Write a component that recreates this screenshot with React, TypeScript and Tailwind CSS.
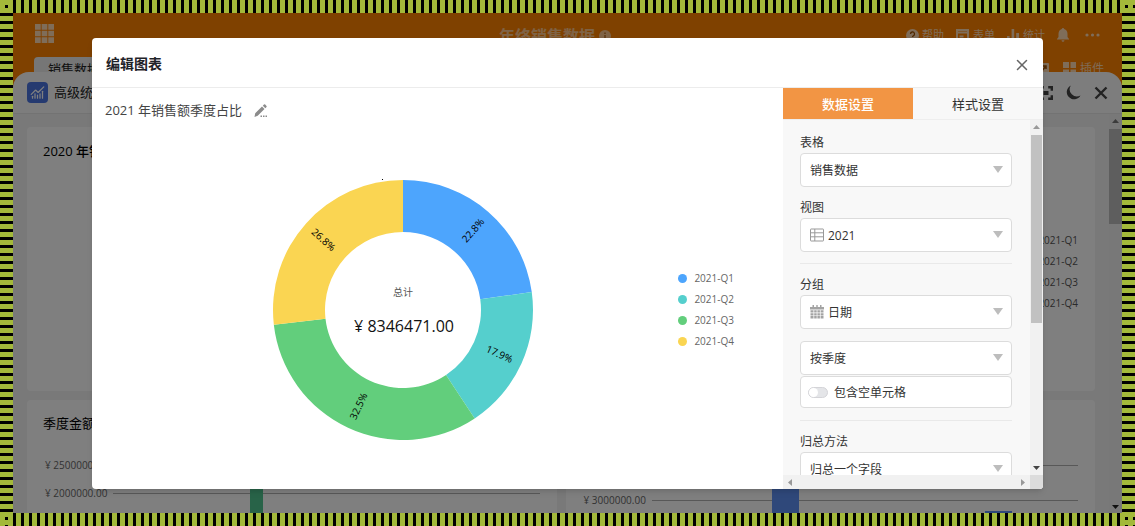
import React, { useState } from "react";
import { ChartNoAxesCombined, X } from "lucide-react";

const stripeX =
  "bg-[repeating-linear-gradient(90deg,#000_0_3px,#a3b93a_3px_8px)]";
const stripeY =
  "bg-[repeating-linear-gradient(180deg,#000_0_3px,#a3b93a_3px_8px)]";
const corner =
  "bg-black bg-[linear-gradient(90deg,#a3b93a_5px,transparent_5px),linear-gradient(180deg,#a3b93a_5px,transparent_5px)] bg-[length:8px_8px]";

const quarters = [
  { name: "2021-Q1", value: 22.8, color: "#4da5fd" },
  { name: "2021-Q2", value: 17.9, color: "#55cfcd" },
  { name: "2021-Q3", value: 32.5, color: "#62ce7c" },
  { name: "2021-Q4", value: 26.8, color: "#fad552" },
];

function polar(percent: number, radius: number) {
  const a = (percent / 100) * Math.PI * 2;
  return [130 + Math.sin(a) * radius, 130 - Math.cos(a) * radius];
}

function Donut() {
  let start = 0;
  return (
    <svg
      width="260"
      height="260"
      viewBox="0 0 260 260"
      className="shrink-0 overflow-visible"
      role="img"
      aria-label="2021 年销售额季度占比"
    >
      {quarters.map((q) => {
        const end = start + q.value;
        const mid = (start + end) / 2;
        const [x1, y1] = polar(start, 130);
        const [x2, y2] = polar(end, 130);
        const [x3, y3] = polar(end, 78);
        const [x4, y4] = polar(start, 78);
        const [lx, ly] = polar(mid, 106);
        const deg = mid * 3.6;
        const rot = deg > 180 ? deg - 270 : deg - 90;
        start = end;
        return (
          <g key={q.name}>
            <path
              fill={q.color}
              d={`M${x1} ${y1}A130 130 0 0 1 ${x2} ${y2}L${x3} ${y3}A78 78 0 0 0 ${x4} ${y4}Z`}
            />
            <text
              transform={`translate(${lx} ${ly}) rotate(${rot})`}
              textAnchor="middle"
              dominantBaseline="central"
              fontSize="10"
              fill="#000"
            >
              {q.value}%
            </text>
          </g>
        );
      })}
      <rect x="109" y="-1" width="1" height="1" fill="#000" />
      <text x="130" y="116" textAnchor="middle" fontSize="10" fill="#555">
        总计
      </text>
      <text x="131" y="152" textAnchor="middle" fontSize="16" fill="#111">
        ¥ 8346471.00
      </text>
    </svg>
  );
}

function Arrow({ dir, color }: { dir: "up" | "down" | "left" | "right"; color: string }) {
  const d = {
    up: "M0 5L3.5 1L7 5Z",
    down: "M0 2L3.5 6L7 2Z",
    left: "M5 0L1 3.5L5 7Z",
    right: "M2 0L6 3.5L2 7Z",
  }[dir];
  return (
    <svg width="7" height="7" viewBox="0 0 7 7" aria-hidden="true">
      <path d={d} fill={color} />
    </svg>
  );
}

function SheetIcon() {
  return (
    <svg width="14" height="14" viewBox="0 0 14 14" fill="none" stroke="#999" aria-hidden="true">
      <rect x="0.5" y="1" width="13" height="12" rx="0.5" />
      <path d="M.5 4.8h13M.5 8.8h13M4.8 1v12" />
    </svg>
  );
}

function CalendarIcon() {
  return (
    <svg width="14" height="14" viewBox="0 0 14 14" aria-hidden="true">
      <path fill="#a3a3a3" d="M0 2h2.500V0H4v2h2.300V0h1.400v2H10V0h1.500v2H14v2.500H0z" />
      <path
        fill="#a3a3a3"
        d="M.5 5.300h3v2.300h-3zM4.200 5.300h2.500v2.300H4.200zM7.400 5.300h2.500v2.300H7.400zM10.600 5.300h2.900v2.300h-2.900zM.5 8.200h3v2.300h-3zM4.200 8.200h2.500v2.300H4.200zM7.400 8.200h2.500v2.300H7.400zM10.600 8.200h2.900v2.300h-2.900zM.5 11.100h3v2.300h-3zM4.200 11.100h2.500v2.300H4.200zM7.400 11.100h2.500v2.300H7.400zM10.600 11.100h2.900v2.300h-2.900z"
      />
    </svg>
  );
}

function Select({
  id,
  label,
  value,
  icon,
}: {
  id: string;
  label?: string;
  value: string;
  icon?: React.ReactNode;
}) {
  return (
    <div>
      {label && (
        <label htmlFor={id} className="mb-px block h-5 pt-px text-xs leading-5 text-[#333]">
          {label}
        </label>
      )}
      <div className="relative">
        <select
          id={id}
          aria-label={label ? undefined : value}
          className={`block h-[34px] w-full appearance-none rounded border border-[#dcdcdc] bg-white pt-[2px] pr-8 text-xs text-[#333] ${
            icon ? "pl-[27px]" : "pl-[9px]"
          }`}
        >
          <option>{value}</option>
        </select>
        {icon && <span className="pointer-events-none absolute top-[10px] left-[10px]">{icon}</span>}
        <svg
          width="10"
          height="7"
          viewBox="0 0 10 7"
          className="pointer-events-none absolute top-[13px] right-[9px]"
          aria-hidden="true"
        >
          <path d="M0 0H10L5 7Z" fill="#bdbdbd" />
        </svg>
      </div>
    </div>
  );
}

function TopBar() {
  return (
    <header className="shrink-0 text-white/70">
      <div className="grid h-11 grid-cols-[1fr_auto_1fr] items-center">
        <button aria-label="应用" className="w-fit pb-1 pl-[22px]">
          <svg width="19" height="19" viewBox="0 0 18 18" fill="currentColor">
            <path d="M0 0h5.4v5.4H0zM6.3 0h5.4v5.4H6.3zM12.6 0H18v5.4h-5.4zM0 6.3h5.4v5.4H0zM6.3 6.3h5.4v5.4H6.3zM12.6 6.3H18v5.4h-5.4zM0 12.6h5.4V18H0zM6.3 12.6h5.4V18H6.3zM12.6 12.6H18V18h-5.4z" />
          </svg>
        </button>
        <h1 className="flex items-center gap-1 pt-[2px] pr-[25px] text-base font-bold text-white/55">
          年终销售数据
          <svg width="12" height="12" viewBox="0 0 12 12" aria-hidden="true">
            <circle cx="6" cy="6" r="6" fill="currentColor" />
            <path d="M6 5v4M6 2.6v1.3" stroke="#b86b20" strokeWidth="1.4" />
          </svg>
        </h1>
        <nav className="flex items-center justify-end pr-[22px] text-[11px]">
          <button className="mr-3 flex items-center gap-[3px]">
            <svg width="13" height="13" viewBox="0 0 13 13" aria-hidden="true">
              <circle cx="6.5" cy="6.5" r="6.5" fill="currentColor" />
              <path d="M4.5 5a2 2 0 1 1 2.8 1.8q-.8.4-.8 1.2M6.5 9v1.4" fill="none" stroke="#a35200" strokeWidth="1.3" />
            </svg>
            <span className="pt-px">帮助</span>
          </button>
          <button className="mr-3 flex items-center gap-1">
            <svg width="13" height="13" viewBox="0 0 13 13" fill="none" stroke="currentColor" strokeWidth="2" aria-hidden="true">
              <path d="M1 1h11v11H1zM1 3.500h11M3.500 7.500h4" />
            </svg>
            <span className="pt-px">表单</span>
          </button>
          <button className="mr-3 flex items-center gap-1">
            <svg width="12" height="13" viewBox="0 0 12 13" fill="currentColor" aria-hidden="true">
              <path d="M0 7h2.6v6H0zM4.6 0h2.6v13H4.6zM9.2 4H12v9H9.2z" />
            </svg>
            <span className="pt-px">统计</span>
          </button>
          <button aria-label="通知" className="mr-4">
            <svg width="12" height="14" viewBox="0 0 12 14" fill="currentColor">
              <path d="M6 0q1 0 1.2 1Q10.500 2 10.500 6v3L12 11v.6H0V11l1.500-2V6Q1.500 2 4.800 1 5 0 6 0zM4.500 12.300h3Q7.300 13.800 6 13.800T4.500 12.300z" />
            </svg>
          </button>
          <button aria-label="更多">
            <svg width="15" height="4" viewBox="0 0 15 4" fill="currentColor">
              <circle cx="2" cy="2" r="1.600" />
              <circle cx="7.500" cy="2" r="1.600" />
              <circle cx="13" cy="2" r="1.600" />
            </svg>
          </button>
        </nav>
      </div>
      <div className="flex h-[15px] items-start justify-between overflow-hidden pr-[18px] pl-[21px]">
        <button className="h-[22px] rounded-t-sm bg-[#ececec] px-[14px] pt-px text-[13px] leading-[22px] text-[#222]">
          销售数据
        </button>
        <div className="flex h-[22px] items-center pt-px text-xs">
          <svg width="13" height="12" viewBox="0 0 13 12" className="mr-[14px]" aria-hidden="true">
            <rect width="13" height="12" rx="1" fill="currentColor" />
            <path d="M5 9l5-6M7 3h3v3" fill="none" stroke="#a35200" strokeWidth="1.500" />
          </svg>
          <button className="flex items-center gap-1">
            <svg width="13" height="13" viewBox="0 0 13 13" fill="currentColor" aria-hidden="true">
              <path d="M0 0h6v6H0zM7.500 0H13v6H7.500zM0 7.500h6V13H0zM7.500 7.500H13V13H7.500z" />
            </svg>
            插件
          </button>
        </div>
      </div>
    </header>
  );
}

function AxisLine({ label, height }: { label: string; height: string }) {
  return (
    <div className={`flex items-center gap-[7px] ${height}`}>
      <span className="w-[61px] shrink-0 text-[10px] whitespace-nowrap text-[#666]">{label}</span>
      <span className="h-px flex-1 bg-[#b0b0b0]" />
    </div>
  );
}

function Dashboard() {
  return (
    <section className="flex min-h-0 flex-1 flex-col overflow-hidden rounded-t-2xl bg-[#fbfbfb]">
      <div className="flex h-[42px] shrink-0 items-center justify-between border-b border-[#e6e6e6] pr-[14px] pl-[14px]">
        <h2 className="flex items-center gap-[6px] text-[13px] text-[#222]">
          <span className="flex size-[21px] items-center justify-center rounded-sm bg-[#4a74e0] text-white">
            <ChartNoAxesCombined size={15} />
          </span>
          <span className="pt-px">高级统计</span>
        </h2>
        <div className="flex items-center gap-[13px] text-[#444]">
          <button aria-label="全屏">
            <svg width="14" height="14" viewBox="0 0 14 14" fill="none" stroke="currentColor" strokeWidth="2.400">
              <path d="M1.200 4.800V1.200h3.600M9.200 1.200h3.600v3.600M12.800 9.200v3.600H9.200M4.800 12.800H1.200V9.200" />
              <path d="M4.500 7h5" strokeWidth="4" />
            </svg>
          </button>
          <button aria-label="深色">
            <svg width="15" height="15" viewBox="0 0 15 15" fill="currentColor">
              <path d="M4.800.5A7.300 7.300 0 1 0 14.500 10.500 7.200 7.200 0 0 1 4.800.5Z" />
            </svg>
          </button>
          <button aria-label="关闭统计">
            <svg width="14" height="14" viewBox="0 0 14 14" stroke="currentColor" strokeWidth="2.400">
              <path d="M1.500 1.500l11 11M12.500 1.500l-11 11" />
            </svg>
          </button>
        </div>
      </div>
      <div className="flex min-h-0 flex-1 bg-[#f3f3f3]">
        <div className="grid min-w-0 flex-1 grid-cols-2 grid-rows-[264px_264px] gap-[9px] overflow-hidden pt-[13px] pr-[14px] pl-[14px]">
          <article className="rounded bg-white px-4">
            <h3 className="pt-[14px] text-[13px] leading-5 font-medium text-black">2020 年销售额季度占比</h3>
          </article>
          <article className="flex items-center justify-end rounded bg-white pt-[25px] pr-[17px]">
            <ul className="text-[10px] leading-[21px] text-[#555]">
              {quarters.map((q) => (
                <li key={q.name}>{q.name}</li>
              ))}
            </ul>
          </article>
          <article className="relative overflow-hidden rounded bg-white pr-[17px] pl-[18px]">
            <h3 className="-ml-[2px] pt-[13px] text-[13px] leading-5 text-black">季度金额统计</h3>
            <div className="pt-[18px]">
              <AxisLine label="¥ 2500000.00" height="h-7" />
              <AxisLine label="¥ 2000000.00" height="h-7" />
            </div>
            <span className="absolute top-[60px] bottom-0 left-[223px] w-[13px] bg-[#50c690]" />
          </article>
          <article className="relative overflow-hidden rounded bg-white pr-[17px] pl-[18px]">
            <div className="pt-[48px]">
              <AxisLine label="¥ 4000000.00" height="h-[35px]" />
              <AxisLine label="¥ 3000000.00" height="h-[35px]" />
            </div>
            <span className="absolute top-[60px] bottom-0 left-[206px] w-[27px] bg-[#5f90f5]" />
            <span className="absolute top-[111px] bottom-0 left-[419px] w-[27px] bg-[#5f90f5]" />
          </article>
        </div>
        <div className="flex w-[13px] shrink-0 flex-col items-center bg-[#f0f0f0]">
          <span className="flex h-[15px] items-center">
            <Arrow dir="up" color="#777" />
          </span>
          <span className="h-[95px] w-full bg-[#bcbcbc]" />
          <span className="mt-auto flex h-[14px] items-center">
            <Arrow dir="down" color="#222" />
          </span>
        </div>
      </div>
    </section>
  );
}

function Settings() {
  const [tab, setTab] = useState(0);
  const [include, setInclude] = useState(false);
  return (
    <aside className="flex w-[260px] shrink-0 flex-col bg-[#f8f8f8]">
      <div role="tablist" className="flex h-8 shrink-0 border-b border-[#eee] text-[13px]">
        {["数据设置", "样式设置"].map((name, i) => (
          <button
            key={name}
            role="tab"
            aria-selected={tab === i}
            onClick={() => setTab(i)}
            className={
              tab === i
                ? "flex-1 bg-[#f29544] pt-[2px] font-medium text-white"
                : "flex-1 pt-[2px] text-[#333]"
            }
          >
            {name}
          </button>
        ))}
      </div>
      <div className="flex min-h-0 flex-1">
        <div className="flex min-w-0 flex-1 flex-col">
          <form className="min-h-0 flex-1 overflow-hidden pt-3 pr-[18px] pl-[17px]">
            <div className="flex flex-col gap-[10px]">
              <Select id="table" label="表格" value="销售数据" />
              <Select id="view" label="视图" value="2021" icon={<SheetIcon />} />
            </div>
            <hr className="mt-[11px] mb-[10px] border-[#e9e9e9]" />
            <div className="flex flex-col gap-3">
              <Select id="group" label="分组" value="日期" icon={<CalendarIcon />} />
              <Select id="period" value="按季度" />
            </div>
            <label className="mt-px flex h-8 items-center gap-[6px] rounded border border-[#dcdcdc] bg-white pl-[7px] text-xs text-[#333]">
              <input
                type="checkbox"
                checked={include}
                onChange={(e) => setInclude(e.target.checked)}
                className="h-[11px] w-5 appearance-none rounded-full border border-[#d4d4d8] bg-[#e4e5e8] before:block before:size-[9px] before:rounded-full before:bg-white checked:bg-[#f29544] checked:before:ml-auto"
              />
              <span className="pt-[2px]">包含空单元格</span>
            </label>
            <hr className="mt-3 mb-[10px] border-[#e9e9e9]" />
            <Select id="method" label="归总方法" value="归总一个字段" />
          </form>
          <div className="flex h-[14px] shrink-0 items-center justify-between bg-[#f1f1f1] px-1">
            <Arrow dir="left" color="#999" />
            <Arrow dir="right" color="#999" />
          </div>
        </div>
        <div className="flex w-[13px] shrink-0 flex-col items-center bg-[#f1f1f1]">
          <span className="flex h-[15px] items-center">
            <Arrow dir="up" color="#999" />
          </span>
          <span className="h-[188px] w-[11px] bg-[#c1c1c1]" />
          <span className="mt-auto flex h-4 items-center">
            <Arrow dir="down" color="#444" />
          </span>
          <span className="h-[14px] w-full bg-[#dcdcdc]" />
        </div>
      </div>
    </aside>
  );
}

function EditDialog() {
  return (
    <div className="absolute inset-0 flex bg-black/50 px-[79px] pt-[25px] pb-6">
      <div
        role="dialog"
        aria-labelledby="dialog-title"
        className="flex min-w-0 flex-1 flex-col overflow-hidden rounded-sm bg-white shadow-md"
      >
        <div className="flex h-[50px] shrink-0 items-center justify-between border-b border-[#ececec] pr-3 pl-[14px]">
          <h2 id="dialog-title" className="pt-[3px] text-sm font-bold text-[#1f2329]">
            编辑图表
          </h2>
          <button aria-label="关闭" className="pt-1 text-[#666]">
            <X size={18} strokeWidth={2} />
          </button>
        </div>
        <div className="flex min-h-0 flex-1">
          <div className="flex min-w-0 flex-1 flex-col">
            <div className="flex h-[43px] shrink-0 items-center gap-3 pt-[2px] pl-[13px] text-[13px] text-[#444]">
              <span>2021 年销售额季度占比</span>
              <button aria-label="编辑名称">
                <svg width="14" height="14" viewBox="0 0 14 14" fill="#8b8b8b">
                  <path d="M1.200 9.300L8 2.500 10.500 5 3.700 11.800.5 13zM8.800 1.700L10 .6q.6-.5 1.200 0L12.500 1.900q.5.600 0 1.200L11.300 4.200zM6.500 11.400H8V13H6.500zM9 11.400h1.500V13H9zM11.500 11.400H13V13H11.500z" />
                </svg>
              </button>
            </div>
            <div className="flex min-h-0 flex-1 items-center justify-between pr-[49px] pl-[181px]">
              <Donut />
              <ul className="text-[10px] leading-[21px] text-[#666]">
                {quarters.map((q) => (
                  <li key={q.name} className="flex items-center gap-[7px]">
                    <svg width="9" height="9" viewBox="0 0 9 9" aria-hidden="true">
                      <circle cx="4.500" cy="4.500" r="4.500" fill={q.color} />
                    </svg>
                    {q.name}
                  </li>
                ))}
              </ul>
            </div>
          </div>
          <Settings />
        </div>
      </div>
    </div>
  );
}

export default function App() {
  return (
    <div className="grid h-screen grid-cols-[13px_minmax(0,1fr)_13px] grid-rows-[13px_minmax(0,1fr)_13px] font-['Open_Sans','Noto_Sans_CJK_SC',sans-serif]">
      <div className={corner} />
      <div className={stripeX} />
      <div className={`${corner} bg-[position:-2px_0]`} />
      <div className={stripeY} />
      <main className="relative flex flex-col overflow-hidden bg-[#ff8200]">
        <TopBar />
        <Dashboard />
        <EditDialog />
      </main>
      <div className={stripeY} />
      <div className={`${corner} bg-[position:0_-1px]`} />
      <div className={stripeX} />
      <div className={`${corner} bg-[position:-2px_-1px]`} />
    </div>
  );
}
